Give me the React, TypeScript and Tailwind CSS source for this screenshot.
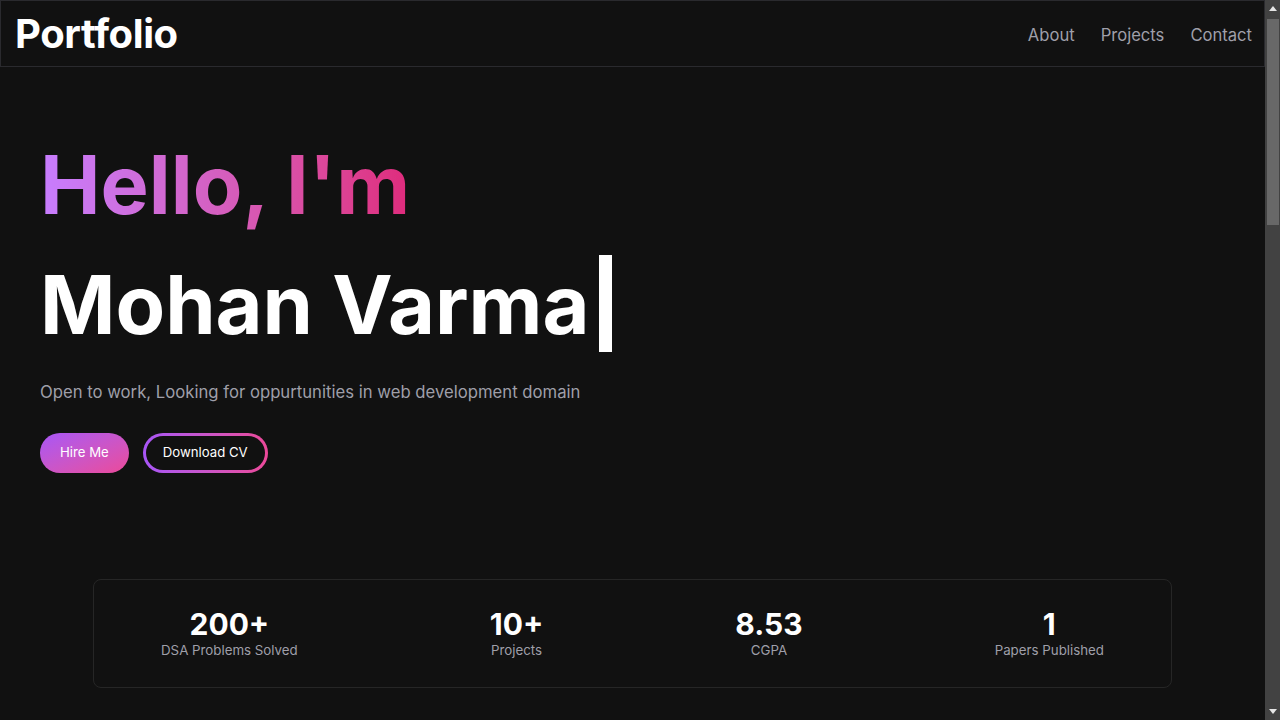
import React from "react";

const stats = [
  { value: "200+", label: "DSA Problems Solved" },
  { value: "10+", label: "Projects" },
  { value: "8.53", label: "CGPA" },
  { value: "1", label: "Papers Published" },
];

function FakeScrollbar() {
  return (
    <div className="fixed right-0 top-0 flex h-screen w-[15px] flex-col items-center bg-[#424242]">
      <div className="flex h-[17px] w-full items-center justify-center">
        <svg width="8" height="5" viewBox="0 0 8 5">
          <polygon points="4,0 8,5 0,5" fill="#e5e5e5" />
        </svg>
      </div>
      <div className="mt-[2px] h-[206px] w-[12px] bg-[#686868]" />
      <div className="flex-1" />
      <div className="flex h-[17px] w-full items-center justify-center">
        <svg width="8" height="5" viewBox="0 0 8 5">
          <polygon points="0,0 8,0 4,5" fill="#e5e5e5" />
        </svg>
      </div>
    </div>
  );
}

export default function App() {
  return (
    <div
      className="min-h-screen bg-[#111111] text-white"
      style={{ fontFamily: "Inter, 'Noto Sans', sans-serif" }}
    >
      <div className="mr-[15px]">
        <header className="flex h-[67px] items-center justify-between border border-[#2a2a2e] pl-[14px] pr-3">
          <div className="text-[40px] font-bold leading-none tracking-[-0.01em] text-white">Portfolio</div>
          <nav className="flex items-center gap-[26px] pt-[4px] text-[16.6px] text-zinc-400">
            <a>About</a>
            <a>Projects</a>
            <a>Contact</a>
          </nav>
        </header>

        <section className="px-10 pt-[58px]">
          <h1 className="text-[81px] font-bold leading-[120px]">
            <span className="inline-block bg-linear-to-r from-[#c77dff] to-[#df2a7c] bg-clip-text text-transparent">
              Hello, I'm
            </span>
          </h1>
          <h2 className="flex h-[120px] items-center text-[81px] font-bold leading-[120px] text-white">
            <span>Mohan Varma</span>
            <span className="ml-[10px] mt-[-3px] inline-block h-[97px] w-[13px] bg-white" />
          </h2>
          <p className="mt-[15px] text-[16.7px] leading-6 text-zinc-400">
            Open to work, Looking for oppurtunities in web development domain
          </p>
          <div className="mt-[29px] flex items-center gap-[14px]">
            <button className="h-10 rounded-full bg-linear-to-br from-[#a855f7] to-[#ec4899] px-5 text-[13.2px] font-normal text-white">
              Hire Me
            </button>
            <div className="rounded-full bg-linear-to-r from-[#a855f7] to-[#ec4899] p-[3px]">
              <button className="h-[34px] rounded-full bg-[#111111] px-[17px] text-[13.2px] font-normal text-white">
                Download CV
              </button>
            </div>
          </div>
        </section>

        <section className="mt-[106px] flex justify-center">
          <div className="flex h-[109px] w-[1079px] items-center justify-between rounded-lg border border-[#262626] px-[67px] pb-[3px]">
            {stats.map((s) => (
              <div key={s.label} className="flex flex-col items-center">
                <div className="text-3xl font-bold leading-9 text-white">{s.value}</div>
                <div className="text-[13.3px] leading-[16px] text-zinc-400">{s.label}</div>
              </div>
            ))}
          </div>
        </section>

        <div className="h-[1650px]" />
      </div>
      <FakeScrollbar />
    </div>
  );
}
